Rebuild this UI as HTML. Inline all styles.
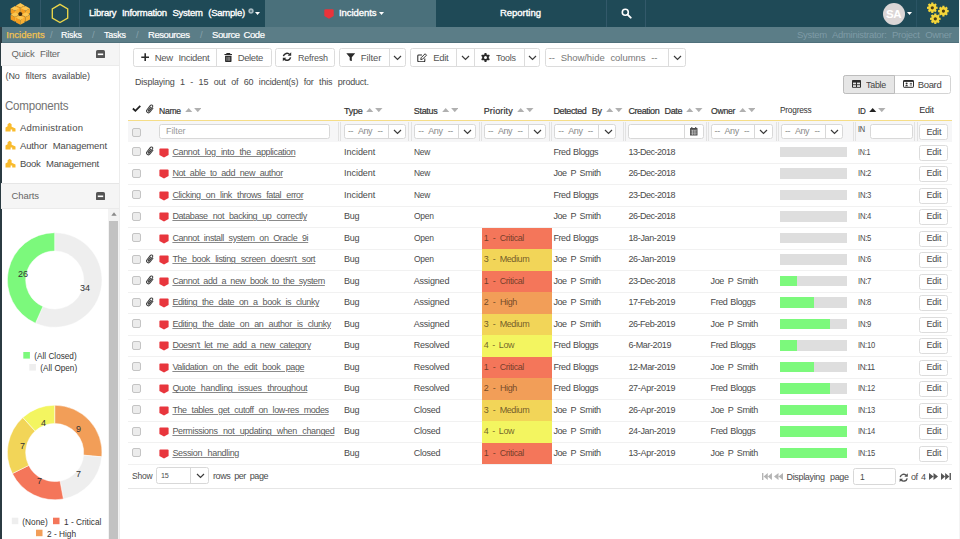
<!DOCTYPE html>
<html lang="en"><head><meta charset="utf-8"><title>Incidents - Library Information System (Sample)</title>
<style>
*{box-sizing:border-box;margin:0;padding:0}
html,body{width:960px;height:539px;overflow:hidden;background:#fff}
body{font-family:"Liberation Sans",sans-serif;font-size:9px;color:#4a4a4a;position:relative}
.abs{position:absolute}
.t{position:absolute;white-space:nowrap;line-height:12px;font-size:9px;color:#4a4a4a}
a.t{text-decoration:underline;color:#5a5a5a}
#top{position:absolute;left:0;top:0;width:959px;height:27px;background:#1f4a57}
.dv{position:absolute;top:0;width:1px;height:27px;background:#33596a}
#tab{position:absolute;left:265px;top:0;width:171px;height:27px;background:#4a707b}
#sub{position:absolute;left:0;top:27px;width:959px;height:16px;background:#5b7d87;border-bottom:1px solid #4f707b}
.ph{position:absolute;left:1px;width:119px;background:#f5f5f5}
.btn{position:absolute;top:48px;height:19px;border:1px solid #dcdcdc;border-radius:2.5px;background:#fff}
.btn i{position:absolute;top:0;width:1px;height:17px;background:#dcdcdc}
.hr{position:absolute;left:128px;width:824px;height:1px;background:#f1f1f1}
.cb{position:absolute;width:9px;height:9px;border:1px solid #c4c4c4;border-radius:2px;background:#ececec}
.pg{position:absolute;left:780px;width:67px;height:10.5px;background:#dedede}
.pg b{display:block;height:10.5px;background:#7cf97c}
.eb{position:absolute;left:919.2px;width:29.2px;height:16px;border:1px solid #dcdcdc;border-radius:2.5px;background:#fff}
.sel{position:absolute;top:123.5px;height:15.5px;border:1px solid #d8d8d8;border-radius:2.5px;background:#fff}
.sel i{position:absolute;top:0;width:1px;height:13.5px;background:#d8d8d8}
.vl{position:absolute;top:122px;width:1px;height:19px;background:#e2e2e2}
</style></head><body>

<div id="top"></div><div id="tab"></div>
<div class="dv" style="left:40px"></div>
<div class="dv" style="left:79px"></div>
<div class="dv" style="left:606px"></div>
<div class="dv" style="left:645px"></div>
<div class="dv" style="left:916px;background:#2a5464"></div>
<svg class="abs" style="left:8.9px;top:1.6px" width="22.6" height="24.6" viewBox="0 0 22 24"><path d="M11 1.0 L15.232 3.3 L11 5.6 L6.768 3.3Z" fill="#fcc650"/><path d="M6.768 3.3 L11 5.6 V10.2 L6.768 7.8999999999999995Z" fill="#f39c1f"/><path d="M15.232 3.3 L11 5.6 V10.2 L15.232 7.8999999999999995Z" fill="#f7b033"/><path d="M5.8 4.0 L10.032 6.3 L5.8 8.6 L1.5679999999999996 6.3Z" fill="#fcc650"/><path d="M1.5679999999999996 6.3 L5.8 8.6 V13.2 L1.5679999999999996 10.899999999999999Z" fill="#f39c1f"/><path d="M10.032 6.3 L5.8 8.6 V13.2 L10.032 10.899999999999999Z" fill="#f7b033"/><path d="M16.2 4.0 L20.432 6.3 L16.2 8.6 L11.968 6.3Z" fill="#fcc650"/><path d="M11.968 6.3 L16.2 8.6 V13.2 L11.968 10.899999999999999Z" fill="#f39c1f"/><path d="M20.432 6.3 L16.2 8.6 V13.2 L20.432 10.899999999999999Z" fill="#f7b033"/><path d="M5.8 10.100000000000001 L10.032 12.4 L5.8 14.7 L1.5679999999999996 12.4Z" fill="#fcc650"/><path d="M1.5679999999999996 12.4 L5.8 14.7 V19.299999999999997 L1.5679999999999996 17.0Z" fill="#f39c1f"/><path d="M10.032 12.4 L5.8 14.7 V19.299999999999997 L10.032 17.0Z" fill="#f7b033"/><path d="M16.2 10.100000000000001 L20.432 12.4 L16.2 14.7 L11.968 12.4Z" fill="#fcc650"/><path d="M11.968 12.4 L16.2 14.7 V19.299999999999997 L11.968 17.0Z" fill="#f39c1f"/><path d="M20.432 12.4 L16.2 14.7 V19.299999999999997 L20.432 17.0Z" fill="#f7b033"/><path d="M11 13.100000000000001 L15.232 15.4 L11 17.7 L6.768 15.4Z" fill="#fcc650"/><path d="M6.768 15.4 L11 17.7 V22.299999999999997 L6.768 20.0Z" fill="#f39c1f"/><path d="M15.232 15.4 L11 17.7 V22.299999999999997 L15.232 20.0Z" fill="#f7b033"/><circle cx="11" cy="11.8" r="1.9" fill="#3b2a12"/></svg>
<svg class="abs" style="left:50px;top:3px" width="20" height="21" viewBox="0 0 20 21"><path d="M10 1.4 L17.7 5.9 V15 L10 19.5 L2.3 15 V5.9 Z" fill="none" stroke="#ead54a" stroke-width="1.35"/></svg>
<span class="t" id="t1" style="left:89px;top:7.20px;font-size:9.5px;color:#fff;word-spacing:3.20px;letter-spacing:-0.24px;-webkit-text-stroke:0.35px #fff;">Library Information System (Sample)</span>
<svg class="abs" style="left:248px;top:8px" width="6" height="6" viewBox="0 0 9 9"><g fill="#a9bcc4"><circle cx="4.5" cy="4.5" r="3.1"/><rect x="3.6" y="0" width="1.8" height="9"/><rect x="0" y="3.6" width="9" height="1.8"/><rect x="3.6" y="0" width="1.8" height="9" transform="rotate(45 4.5 4.5)"/><rect x="3.6" y="0" width="1.8" height="9" transform="rotate(-45 4.5 4.5)"/></g><circle cx="4.5" cy="4.5" r="1.3" fill="#1f4a57"/></svg>
<svg class="abs" style="left:255px;top:12px" width="5" height="3" viewBox="0 0 5 3"><path d="M0 0 H5 L2.5 3Z" fill="#fff"/></svg>
<svg class="abs" style="left:324px;top:8.5px" width="10" height="10" viewBox="0 0 10 10"><path d="M1.5 0.3 H8.5 Q9.7 0.3 9.7 1.5 V7 L5 9.8 L0.3 7 V1.5 Q0.3 0.3 1.5 0.3 Z" fill="#ea333b"/></svg>
<span class="t" id="t2" style="left:339px;top:7.20px;font-size:9.5px;color:#fff;letter-spacing:-0.07px;-webkit-text-stroke:0.35px #fff;">Incidents</span>
<svg class="abs" style="left:379px;top:12px" width="5" height="3" viewBox="0 0 5 3"><path d="M0 0 H5 L2.5 3Z" fill="#fff"/></svg>
<span class="t" id="t3" style="left:500px;top:7.20px;font-size:9.5px;color:#fff;letter-spacing:-0.03px;-webkit-text-stroke:0.35px #fff;">Reporting</span>
<svg class="abs" style="left:621px;top:8px" width="11" height="11" viewBox="0 0 11 11"><circle cx="4.3" cy="4.3" r="3" fill="none" stroke="#fff" stroke-width="1.6"/><path d="M6.6 6.6 L9.7 9.7" stroke="#fff" stroke-width="1.9" stroke-linecap="round"/></svg>
<div class="abs" style="left:882.5px;top:2.5px;width:22px;height:22px;border-radius:11px;background:#dbd6d6"></div>
<span class="t" id="t4" style="left:886px;top:6.60px;font-size:11.5px;color:#fff;font-weight:bold;line-height:14px;letter-spacing:-0.48px;">SA</span>
<svg class="abs" style="left:906.5px;top:12px" width="5" height="3" viewBox="0 0 5 3"><path d="M0 0 H5 L2.5 3Z" fill="#fff"/></svg>
<svg class="abs" style="left:924px;top:0" width="30" height="27" viewBox="0 0 30 27"><path d="M13.59 6.70 L13.59 8.90 L12.37 8.84 L11.92 9.94 L12.81 10.76 L11.26 12.31 L10.44 11.42 L9.34 11.87 L9.40 13.09 L7.20 13.09 L7.26 11.87 L6.16 11.42 L5.34 12.31 L3.79 10.76 L4.68 9.94 L4.23 8.84 L3.01 8.90 L3.01 6.70 L4.23 6.76 L4.68 5.66 L3.79 4.84 L5.34 3.29 L6.16 4.18 L7.26 3.73 L7.20 2.51 L9.40 2.51 L9.34 3.73 L10.44 4.18 L11.26 3.29 L12.81 4.84 L11.92 5.66 L12.37 6.76Z" fill="#f3d53a"/><circle cx="8.3" cy="7.8" r="1.6" fill="#4a3c14"/><path d="M24.69 10.00 L24.69 12.20 L23.47 12.14 L23.02 13.24 L23.91 14.06 L22.36 15.61 L21.54 14.72 L20.44 15.17 L20.50 16.39 L18.30 16.39 L18.36 15.17 L17.26 14.72 L16.44 15.61 L14.89 14.06 L15.78 13.24 L15.33 12.14 L14.11 12.20 L14.11 10.00 L15.33 10.06 L15.78 8.96 L14.89 8.14 L16.44 6.59 L17.26 7.48 L18.36 7.03 L18.30 5.81 L20.50 5.81 L20.44 7.03 L21.54 7.48 L22.36 6.59 L23.91 8.14 L23.02 8.96 L23.47 10.06Z" fill="#f3d53a"/><circle cx="19.4" cy="11.1" r="1.6" fill="#4a3c14"/><path d="M16.59 17.70 L16.59 19.90 L15.37 19.84 L14.92 20.94 L15.81 21.76 L14.26 23.31 L13.44 22.42 L12.34 22.87 L12.40 24.09 L10.20 24.09 L10.26 22.87 L9.16 22.42 L8.34 23.31 L6.79 21.76 L7.68 20.94 L7.23 19.84 L6.01 19.90 L6.01 17.70 L7.23 17.76 L7.68 16.66 L6.79 15.84 L8.34 14.29 L9.16 15.18 L10.26 14.73 L10.20 13.51 L12.40 13.51 L12.34 14.73 L13.44 15.18 L14.26 14.29 L15.81 15.84 L14.92 16.66 L15.37 17.76Z" fill="#f3d53a"/><circle cx="11.3" cy="18.8" r="1.6" fill="#4a3c14"/></svg>
<div class="abs" style="left:959px;top:0;width:1px;height:539px;background:#f4f4f4"></div>
<div id="sub"></div>
<span class="t" id="t5" style="left:6.3px;top:28.70px;font-size:9.5px;color:#f2c250;letter-spacing:0.05px;-webkit-text-stroke:0.25px #f2c250;">Incidents</span>
<span class="t" id="t6" style="left:61px;top:28.70px;font-size:9.5px;color:#fff;letter-spacing:-0.25px;transform:scaleX(0.944);transform-origin:0 50%;-webkit-text-stroke:0.2px #fff;">Risks</span>
<span class="t" id="t7" style="left:104px;top:28.70px;font-size:9.5px;color:#fff;letter-spacing:-0.25px;transform:scaleX(0.944);transform-origin:0 50%;-webkit-text-stroke:0.2px #fff;">Tasks</span>
<span class="t" id="t8" style="left:148px;top:28.70px;font-size:9.5px;color:#fff;letter-spacing:-0.43px;-webkit-text-stroke:0.2px #fff;">Resources</span>
<span class="t" id="t9" style="left:212px;top:28.70px;font-size:9.5px;color:#fff;word-spacing:1.55px;letter-spacing:-0.40px;-webkit-text-stroke:0.2px #fff;">Source Code</span>
<span class="t" id="t10" style="left:50px;top:28.70px;font-size:9.5px;color:#86a1ab;">/</span>
<span class="t" id="t11" style="left:92px;top:28.70px;font-size:9.5px;color:#86a1ab;">/</span>
<span class="t" id="t12" style="left:136px;top:28.70px;font-size:9.5px;color:#86a1ab;">/</span>
<span class="t" id="t13" style="left:200px;top:28.70px;font-size:9.5px;color:#86a1ab;">/</span>
<span class="t" id="t14" style="left:797px;top:28.70px;font-size:9.5px;color:#7e9ba6;word-spacing:3.20px;letter-spacing:-0.29px;">System Administrator: Project Owner</span>
<div class="abs" style="left:0;top:27px;width:1.5px;height:512px;background:#2b3b42"></div>
<div class="ph" style="top:43px;height:23px;border-bottom:1px solid #ebebeb"></div>
<span class="t" id="t15" style="left:11.5px;top:47.80px;font-size:9.5px;color:#666;word-spacing:3.20px;letter-spacing:-0.25px;">Quick Filter</span>
<svg class="abs" style="left:96.3px;top:49.5px" width="9" height="8.5" viewBox="0 0 9 8.5"><rect x="0" y="0" width="9" height="8.5" rx="1.6" fill="#555"/><rect x="1.8" y="3.5" width="5.4" height="1.6" fill="#fff"/></svg>
<span class="t" id="t16" style="left:5.5px;top:69.50px;word-spacing:3.20px;letter-spacing:-0.07px;">(No filters available)</span>
<span class="t" id="t17" style="left:4.5px;top:97.60px;font-size:12.5px;color:#727272;line-height:16px;letter-spacing:-0.25px;transform:scaleX(0.925);transform-origin:0 50%;">Components</span>
<svg class="abs" style="left:5px;top:122.3px" width="11" height="10" viewBox="0 0 11 10"><path d="M0.5 9.6 V5.6 L2.6 4.2 V2.2 L4.6 0.8 L6.6 2.2 V4.8 L10.5 6.6 V9.6 H7.2 V7.6 H5.6 V9.6 Z" fill="#f9bb2d"/></svg>
<span class="t" id="t18" style="left:20px;top:121.80px;font-size:9.5px;letter-spacing:0.21px;">Administration</span>
<svg class="abs" style="left:5px;top:140.3px" width="11" height="10" viewBox="0 0 11 10"><path d="M0.5 9.6 V5.6 L2.6 4.2 V2.2 L4.6 0.8 L6.6 2.2 V4.8 L10.5 6.6 V9.6 H7.2 V7.6 H5.6 V9.6 Z" fill="#f9bb2d"/></svg>
<span class="t" id="t19" style="left:20px;top:139.80px;font-size:9.5px;word-spacing:3.20px;letter-spacing:-0.14px;">Author Management</span>
<svg class="abs" style="left:5px;top:158.0px" width="11" height="10" viewBox="0 0 11 10"><path d="M0.5 9.6 V5.6 L2.6 4.2 V2.2 L4.6 0.8 L6.6 2.2 V4.8 L10.5 6.6 V9.6 H7.2 V7.6 H5.6 V9.6 Z" fill="#f9bb2d"/></svg>
<span class="t" id="t20" style="left:20px;top:157.50px;font-size:9.5px;word-spacing:3.20px;letter-spacing:-0.28px;">Book Management</span>
<div class="abs" style="left:1px;top:182.5px;width:119px;height:1px;background:#e6e6e6"></div>
<div class="ph" style="top:183.5px;height:25px;border-bottom:1px solid #ebebeb"></div>
<span class="t" id="t21" style="left:11.5px;top:189.80px;font-size:9.5px;color:#666;letter-spacing:-0.10px;">Charts</span>
<svg class="abs" style="left:96.3px;top:191.5px" width="9" height="8.5" viewBox="0 0 9 8.5"><rect x="0" y="0" width="9" height="8.5" rx="1.6" fill="#555"/><rect x="1.8" y="3.5" width="5.4" height="1.6" fill="#fff"/></svg>
<div class="abs" style="left:119px;top:43px;width:1px;height:496px;background:#ececec"></div>
<div class="abs" style="left:108px;top:208.5px;width:11px;height:331px;background:#f3f3f3"></div>
<div class="abs" style="left:109px;top:220.5px;width:9px;height:319px;background:#c2c2c2"></div>
<svg class="abs" style="left:110.5px;top:212px" width="6" height="4" viewBox="0 0 6 4"><path d="M3 0.3 L5.7 3.7 H0.3Z" fill="#8a8a8a"/></svg>
<svg class="abs" style="left:0;top:206px" width="108" height="333" viewBox="0 0 108 333" font-family="Liberation Sans,sans-serif" fill="#333"><path d="M54.70 26.70 A47.3 47.3 0 1 1 35.46 117.21 L42.90 100.49 A29 29 0 1 0 54.70 45.00Z" fill="#eeeeee" stroke="#fff" stroke-width="0.5"/><path d="M35.46 117.21 A47.3 47.3 0 0 1 54.70 26.70 L54.70 45.00 A29 29 0 0 0 42.90 100.49Z" fill="#7cf97c" stroke="#fff" stroke-width="0.5"/><text x="18" y="71" font-size="9">26</text><text x="80" y="85" font-size="9">34</text><rect x="23.3" y="146" width="6.6" height="6.6" fill="#7cf97c"/><text x="34.3" y="153" font-size="8.2">(All Closed)</text><rect x="29.3" y="158" width="6.6" height="6.6" fill="#eeeeee"/><text x="40.3" y="165" font-size="8.2">(All Open)</text><path d="M54.70 199.20 A47.3 47.3 0 0 1 101.80 250.86 L83.58 249.18 A29 29 0 0 0 54.70 217.50Z" fill="#f29e58" stroke="#fff" stroke-width="0.5"/><path d="M101.80 250.86 A47.3 47.3 0 0 1 63.39 292.99 L60.03 275.01 A29 29 0 0 0 83.58 249.18Z" fill="#eeeeee" stroke="#fff" stroke-width="0.5"/><path d="M63.39 292.99 A47.3 47.3 0 0 1 12.36 267.58 L28.74 259.43 A29 29 0 0 0 60.03 275.01Z" fill="#f4765a" stroke="#fff" stroke-width="0.5"/><path d="M12.36 267.58 A47.3 47.3 0 0 1 22.83 211.54 L35.16 225.07 A29 29 0 0 0 28.74 259.43Z" fill="#f2d558" stroke="#fff" stroke-width="0.5"/><path d="M22.83 211.54 A47.3 47.3 0 0 1 54.70 199.20 L54.70 217.50 A29 29 0 0 0 35.16 225.07Z" fill="#f3f560" stroke="#fff" stroke-width="0.5"/><text x="41" y="220" font-size="9">4</text><text x="76" y="226" font-size="9">9</text><text x="20" y="243" font-size="9">7</text><text x="76" y="271" font-size="9">7</text><text x="37" y="278" font-size="9">7</text><rect x="11.8" y="311.7" width="6.5" height="6.5" fill="#eeeeee"/><text x="22.3" y="319" font-size="8.3">(None)</text><rect x="53" y="311.7" width="6.5" height="6.5" fill="#f4765a"/><text x="64" y="319" font-size="8.3">1 - Critical</text><rect x="36" y="323.7" width="6.5" height="6.5" fill="#f29e58"/><text x="47" y="331" font-size="8.3">2 - High</text></svg>
<div class="btn" style="left:133px;width:138.5px"></div><div class="abs" style="left:216px;top:49px;width:1px;height:17px;background:#dcdcdc"></div>
<svg class="abs" style="left:140.5px;top:53px" width="8.4" height="8.4" viewBox="0 0 9 9"><path d="M4.5 0.3 V8.7 M0.3 4.5 H8.7" stroke="#2a2a2a" stroke-width="1.7"/></svg>
<span class="t" id="t22" style="left:154.7px;top:51.50px;font-size:9.5px;color:#555;word-spacing:3.20px;letter-spacing:-0.28px;">New Incident</span>
<svg class="abs" style="left:223.6px;top:52.5px" width="8.6" height="9.2" viewBox="0 0 9 10"><path d="M0.3 1.6 H8.7 M3 1.3 V0.5 H6 V1.3" stroke="#2a2a2a" stroke-width="1.2" fill="none"/><path d="M1 3 H8 V9 Q8 9.8 7.2 9.8 H1.8 Q1 9.8 1 9Z" fill="#2a2a2a"/><path d="M3 4.2 V8.5 M4.5 4.2 V8.5 M6 4.2 V8.5" stroke="#fff" stroke-width="0.5"/></svg>
<span class="t" id="t23" style="left:237.7px;top:51.50px;font-size:9.5px;color:#555;letter-spacing:-0.37px;">Delete</span>
<div class="btn" style="left:275px;width:60px"></div>
<svg class="abs" style="left:281.5px;top:52.3px" width="10" height="9.6" viewBox="0 0 11 11"><path d="M1.4 4.8 A4.2 4.2 0 0 1 8.7 3" fill="none" stroke="#2a2a2a" stroke-width="1.7"/><path d="M10.3 0.4 V4.4 H6.3Z" fill="#2a2a2a"/><path d="M9.6 6.2 A4.2 4.2 0 0 1 2.3 8" fill="none" stroke="#2a2a2a" stroke-width="1.7"/><path d="M0.7 10.6 V6.6 H4.7Z" fill="#2a2a2a"/></svg>
<span class="t" id="t24" style="left:297.5px;top:51.50px;font-size:9.5px;color:#555;letter-spacing:-0.25px;transform:scaleX(0.944);transform-origin:0 50%;">Refresh</span>
<div class="btn" style="left:338.7px;width:67.60000000000002px"></div><div class="abs" style="left:388.5px;top:49px;width:1px;height:17px;background:#dcdcdc"></div>
<svg class="abs" style="left:345.8px;top:52.7px" width="9.5" height="8.7" viewBox="0 0 9.5 8.7"><path d="M0.3 0.2 H9.2 L5.8 4.2 V8.5 L3.7 7.3 V4.2Z" fill="#2a2a2a"/></svg>
<span class="t" id="t25" style="left:360.8px;top:51.50px;font-size:9.5px;color:#555;letter-spacing:-0.12px;">Filter</span>
<svg class="abs" style="left:393px;top:54.8px" width="9" height="6" viewBox="0 0 9 6"><path d="M1 1 L4.5 4.5 L8 1" fill="none" stroke="#3a3a3a" stroke-width="1.2"/></svg>
<div class="btn" style="left:410.3px;width:129.7px"></div><div class="abs" style="left:456px;top:49px;width:1px;height:17px;background:#dcdcdc"></div><div class="abs" style="left:473.5px;top:49px;width:1px;height:17px;background:#dcdcdc"></div><div class="abs" style="left:523.5px;top:49px;width:1px;height:17px;background:#dcdcdc"></div>
<svg class="abs" style="left:417px;top:52.5px" width="10.5" height="9.5" viewBox="0 0 11 10"><path d="M8.2 5.8 V8.2 Q8.2 9.2 7.2 9.2 H1.8 Q0.8 9.2 0.8 8.2 V3 Q0.8 2 1.8 2 H5.2" fill="none" stroke="#2a2a2a" stroke-width="1.1"/><path d="M3.9 6.9 L4.3 5 L8.5 0.8 L10 2.3 L5.8 6.5Z" fill="none" stroke="#2a2a2a" stroke-width="1"/></svg>
<span class="t" id="t26" style="left:433.3px;top:51.50px;font-size:9.5px;color:#555;letter-spacing:-0.33px;">Edit</span>
<svg class="abs" style="left:460.5px;top:54.8px" width="9" height="6" viewBox="0 0 9 6"><path d="M1 1 L4.5 4.5 L8 1" fill="none" stroke="#3a3a3a" stroke-width="1.2"/></svg>
<svg class="abs" style="left:480.6px;top:52.8px" width="9" height="9" viewBox="0 0 9 9"><g fill="#2a2a2a"><circle cx="4.5" cy="4.5" r="3.3"/><rect x="3.5" y="0" width="2" height="9"/><rect x="3.5" y="0" width="2" height="9" transform="rotate(60 4.5 4.5)"/><rect x="3.5" y="0" width="2" height="9" transform="rotate(-60 4.5 4.5)"/></g><circle cx="4.5" cy="4.5" r="1.5" fill="#fff"/></svg>
<span class="t" id="t27" style="left:495.8px;top:51.50px;font-size:9.5px;color:#555;letter-spacing:-0.25px;transform:scaleX(0.944);transform-origin:0 50%;">Tools</span>
<svg class="abs" style="left:528px;top:54.8px" width="9" height="6" viewBox="0 0 9 6"><path d="M1 1 L4.5 4.5 L8 1" fill="none" stroke="#3a3a3a" stroke-width="1.2"/></svg>
<div class="btn" style="left:544.5px;width:141.79999999999995px"></div><div class="abs" style="left:667.5px;top:49px;width:1px;height:17px;background:#dcdcdc"></div>
<span class="t" id="t28" style="left:548.7px;top:51.50px;font-size:9.5px;color:#777;word-spacing:3.20px;letter-spacing:-0.05px;">-- Show/hide columns --</span>
<svg class="abs" style="left:672.5px;top:54.8px" width="9" height="6" viewBox="0 0 9 6"><path d="M1 1 L4.5 4.5 L8 1" fill="none" stroke="#3a3a3a" stroke-width="1.2"/></svg>
<span class="t" id="t29" style="left:135px;top:76.30px;word-spacing:3.20px;letter-spacing:-0.20px;">Displaying 1 - 15 out of 60 incident(s) for this product.</span>
<div class="abs" style="left:843px;top:75px;width:107.5px;height:18.7px;border:1px solid #d4d4d4;border-radius:2.5px;background:#fff"></div>
<div class="abs" style="left:843px;top:75px;width:52px;height:18.7px;border:1px solid #bdbdbd;border-radius:2.5px 0 0 2.5px;background:#e6e6e6"></div>
<svg class="abs" style="left:852px;top:80px" width="9" height="7.8" viewBox="0 0 9 7.8"><rect x="0" y="0" width="9" height="7.8" rx="0.8" fill="#2a2a2a"/><rect x="1" y="2.6" width="3" height="1.7" fill="#e6e6e6"/><rect x="5" y="2.6" width="3" height="1.7" fill="#e6e6e6"/><rect x="1" y="5.2" width="3" height="1.7" fill="#e6e6e6"/><rect x="5" y="5.2" width="3" height="1.7" fill="#e6e6e6"/></svg>
<span class="t" id="t30" style="left:865.5px;top:78.80px;font-size:9.5px;color:#444;letter-spacing:-0.25px;transform:scaleX(0.935);transform-origin:0 50%;">Table</span>
<svg class="abs" style="left:903px;top:80px" width="11" height="7.8" viewBox="0 0 11 7.8"><rect x="0.5" y="0.5" width="10" height="6.8" rx="0.6" fill="none" stroke="#2a2a2a" stroke-width="1"/><rect x="0.5" y="0.5" width="10" height="1.4" fill="#2a2a2a"/><circle cx="3.6" cy="3.6" r="1" fill="#2a2a2a"/><path d="M1.9 6.3 Q3.6 3.8 5.3 6.3Z" fill="#2a2a2a"/><path d="M6.8 3.4 H9 M6.8 5 H9" stroke="#2a2a2a" stroke-width="0.8"/></svg>
<span class="t" id="t31" style="left:917.7px;top:78.80px;font-size:9.5px;color:#444;letter-spacing:-0.34px;">Board</span>
<svg class="abs" style="left:131.8px;top:105.3px" width="9.2" height="7" viewBox="0 0 9.2 7"><path d="M0.9 3.5 L3.4 5.8 L8.3 0.9" fill="none" stroke="#222" stroke-width="1.8"/></svg>
<svg class="abs" style="left:145px;top:104.3px" width="10" height="10" viewBox="0 0 10 10"><g transform="rotate(38 5 5)"><path d="M6.9 2.6 V7.4 a1.9 1.9 0 0 1 -3.8 0 V1.9 a1.3 1.3 0 0 1 2.6 0 V6.9 a0.65 0.65 0 0 1 -1.3 0 V3.2" fill="none" stroke="#3a3a3a" stroke-width="1" stroke-linecap="round"/></g></svg>
<span class="t" id="t32" style="left:158.9px;top:105.30px;color:#333;letter-spacing:-0.25px;transform:scaleX(0.950);transform-origin:0 50%;-webkit-text-stroke:0.2px #333;">Name</span>
<svg class="abs" style="left:184.7px;top:108.1px" width="16.5" height="4.2" viewBox="0 0 16.5 4.2"><path d="M0 4.2 L3.7 0 L7.4 4.2Z" fill="#b0b0b0"/><path d="M9.1 0 H16.5 L12.8 4.2Z" fill="#b0b0b0"/></svg>
<span class="t" id="t33" style="left:344px;top:105.30px;color:#333;letter-spacing:-0.24px;-webkit-text-stroke:0.2px #333;">Type</span>
<svg class="abs" style="left:366px;top:108.1px" width="16.5" height="4.2" viewBox="0 0 16.5 4.2"><path d="M0 4.2 L3.7 0 L7.4 4.2Z" fill="#b0b0b0"/><path d="M9.1 0 H16.5 L12.8 4.2Z" fill="#b0b0b0"/></svg>
<span class="t" id="t34" style="left:413.7px;top:105.30px;color:#333;letter-spacing:-0.28px;-webkit-text-stroke:0.2px #333;">Status</span>
<svg class="abs" style="left:441.5px;top:108.1px" width="16.5" height="4.2" viewBox="0 0 16.5 4.2"><path d="M0 4.2 L3.7 0 L7.4 4.2Z" fill="#b0b0b0"/><path d="M9.1 0 H16.5 L12.8 4.2Z" fill="#b0b0b0"/></svg>
<span class="t" id="t35" style="left:483.7px;top:105.30px;color:#333;letter-spacing:0.15px;-webkit-text-stroke:0.2px #333;">Priority</span>
<svg class="abs" style="left:517px;top:108.1px" width="16.5" height="4.2" viewBox="0 0 16.5 4.2"><path d="M0 4.2 L3.7 0 L7.4 4.2Z" fill="#b0b0b0"/><path d="M9.1 0 H16.5 L12.8 4.2Z" fill="#b0b0b0"/></svg>
<span class="t" id="t36" style="left:553.4px;top:105.30px;color:#333;word-spacing:3.20px;letter-spacing:-0.37px;-webkit-text-stroke:0.2px #333;">Detected By</span>
<svg class="abs" style="left:606px;top:108.1px" width="16.5" height="4.2" viewBox="0 0 16.5 4.2"><path d="M0 4.2 L3.7 0 L7.4 4.2Z" fill="#b0b0b0"/><path d="M9.1 0 H16.5 L12.8 4.2Z" fill="#b0b0b0"/></svg>
<span class="t" id="t37" style="left:628.4px;top:105.30px;color:#333;word-spacing:3.20px;letter-spacing:-0.39px;-webkit-text-stroke:0.2px #333;">Creation Date</span>
<svg class="abs" style="left:686px;top:108.1px" width="16.5" height="4.2" viewBox="0 0 16.5 4.2"><path d="M0 4.2 L3.7 0 L7.4 4.2Z" fill="#b0b0b0"/><path d="M9.1 0 H16.5 L12.8 4.2Z" fill="#b0b0b0"/></svg>
<span class="t" id="t38" style="left:710.6px;top:105.30px;color:#333;letter-spacing:-0.25px;transform:scaleX(0.956);transform-origin:0 50%;-webkit-text-stroke:0.2px #333;">Owner</span>
<svg class="abs" style="left:738.7px;top:108.1px" width="16.5" height="4.2" viewBox="0 0 16.5 4.2"><path d="M0 4.2 L3.7 0 L7.4 4.2Z" fill="#b0b0b0"/><path d="M9.1 0 H16.5 L12.8 4.2Z" fill="#b0b0b0"/></svg>
<span class="t" id="t39" style="left:780.3px;top:103.50px;color:#333;letter-spacing:-0.25px;transform:scaleX(0.925);transform-origin:0 50%;">Progress</span>
<span class="t" id="t40" style="left:857.5px;top:105.30px;color:#333;letter-spacing:-0.25px;transform:scaleX(0.891);transform-origin:0 50%;-webkit-text-stroke:0.2px #333;">ID</span>
<svg class="abs" style="left:869.4px;top:108.1px" width="16.5" height="4.2" viewBox="0 0 16.5 4.2"><path d="M0 4.2 L3.7 0 L7.4 4.2Z" fill="#222"/><path d="M9.1 0 H16.5 L12.8 4.2Z" fill="#b0b0b0"/></svg>
<span class="t" id="t41" style="left:919.2px;top:103.70px;color:#333;letter-spacing:-0.24px;">Edit</span>
<div class="abs" style="left:128px;top:120px;width:824px;height:1.2px;background:#f5dd88"></div>
<div class="abs" style="left:128px;top:121.2px;width:824px;height:20.6px;background:#f6f6f7"></div>
<div class="cb" style="left:132px;top:128px"></div>
<div class="sel" style="left:159.4px;width:171px"></div>
<span class="t" id="t42" style="left:166px;top:125.30px;color:#9a9a9a;letter-spacing:-0.08px;">Filter</span>
<div class="sel" style="left:344px;width:62px"><i style="left:42.80000000000001px"></i></div><span class="t" id="t43" style="left:348px;top:125.30px;color:#8a8a8a;word-spacing:3.09px;letter-spacing:-0.40px;">-- Any --</span><svg class="abs" style="left:392.8px;top:128.8px" width="9" height="6" viewBox="0 0 9 6"><path d="M1 1 L4.5 4.5 L8 1" fill="none" stroke="#3a3a3a" stroke-width="1.2"/></svg>
<div class="sel" style="left:414.3px;width:61.69999999999999px"><i style="left:42.69999999999999px"></i></div><span class="t" id="t44" style="left:418.3px;top:125.30px;color:#8a8a8a;word-spacing:3.09px;letter-spacing:-0.40px;">-- Any --</span><svg class="abs" style="left:463px;top:128.8px" width="9" height="6" viewBox="0 0 9 6"><path d="M1 1 L4.5 4.5 L8 1" fill="none" stroke="#3a3a3a" stroke-width="1.2"/></svg>
<div class="sel" style="left:484px;width:62px"><i style="left:43px"></i></div><span class="t" id="t45" style="left:488px;top:125.30px;color:#8a8a8a;word-spacing:3.09px;letter-spacing:-0.40px;">-- Any --</span><svg class="abs" style="left:533px;top:128.8px" width="9" height="6" viewBox="0 0 9 6"><path d="M1 1 L4.5 4.5 L8 1" fill="none" stroke="#3a3a3a" stroke-width="1.2"/></svg>
<div class="sel" style="left:554.3px;width:62.200000000000045px"><i style="left:43.200000000000045px"></i></div><span class="t" id="t46" style="left:558.3px;top:125.30px;color:#8a8a8a;word-spacing:3.09px;letter-spacing:-0.40px;">-- Any --</span><svg class="abs" style="left:603.5px;top:128.8px" width="9" height="6" viewBox="0 0 9 6"><path d="M1 1 L4.5 4.5 L8 1" fill="none" stroke="#3a3a3a" stroke-width="1.2"/></svg>
<div class="sel" style="left:710.6px;width:62.39999999999998px"><i style="left:42.799999999999955px"></i></div><span class="t" id="t47" style="left:714.6px;top:125.30px;color:#8a8a8a;word-spacing:3.09px;letter-spacing:-0.40px;">-- Any --</span><svg class="abs" style="left:759.4px;top:128.8px" width="9" height="6" viewBox="0 0 9 6"><path d="M1 1 L4.5 4.5 L8 1" fill="none" stroke="#3a3a3a" stroke-width="1.2"/></svg>
<div class="sel" style="left:781px;width:61.5px"><i style="left:42.700000000000045px"></i></div><span class="t" id="t48" style="left:785px;top:125.30px;color:#8a8a8a;word-spacing:3.09px;letter-spacing:-0.40px;">-- Any --</span><svg class="abs" style="left:829.7px;top:128.8px" width="9" height="6" viewBox="0 0 9 6"><path d="M1 1 L4.5 4.5 L8 1" fill="none" stroke="#3a3a3a" stroke-width="1.2"/></svg>
<div class="sel" style="left:628.4px;width:75.4px"><i style="left:55px"></i></div>
<svg class="abs" style="left:690px;top:127px" width="7.5" height="8.5" viewBox="0 0 7.5 8.5"><rect x="0" y="1" width="7.5" height="7.5" rx="0.6" fill="#4a4a4a"/><path d="M1.8 0 V2 M5.7 0 V2" stroke="#4a4a4a" stroke-width="1.1"/><path d="M0.6 3.2 H6.9 M0.6 5 H6.9 M0.6 6.8 H6.9 M2.6 3 V8 M4.9 3 V8" stroke="#fff" stroke-width="0.45"/></svg>
<span class="t" id="t49" style="left:857.8px;top:124.20px;font-size:8.2px;letter-spacing:-0.25px;transform:scaleX(0.907);transform-origin:0 50%;">IN</span>
<div class="sel" style="left:870px;width:42.5px"></div>
<div class="eb" style="top:123.7px"></div><span class="t" id="t50" style="left:926.6px;top:125.50px;letter-spacing:-0.24px;">Edit</span>
<div class="vl" style="left:337.5px"></div>
<div class="vl" style="left:340px"></div>
<div class="vl" style="left:408px"></div>
<div class="vl" style="left:410.5px"></div>
<div class="vl" style="left:478.5px"></div>
<div class="vl" style="left:481px"></div>
<div class="vl" style="left:548.7px"></div>
<div class="vl" style="left:551.2px"></div>
<div class="vl" style="left:622.5px"></div>
<div class="vl" style="left:625px"></div>
<div class="vl" style="left:705.5px"></div>
<div class="vl" style="left:708px"></div>
<div class="vl" style="left:775.5px"></div>
<div class="vl" style="left:778px"></div>
<div class="vl" style="left:852.5px"></div>
<div class="vl" style="left:855px"></div>
<div class="vl" style="left:914px"></div>
<div class="vl" style="left:916.5px"></div>
<div class="hr" style="top:162.8px"></div>
<div class="cb" style="left:132px;top:147.2px"></div>
<svg class="abs" style="left:145px;top:146.4px" width="10" height="10" viewBox="0 0 10 10"><g transform="rotate(38 5 5)"><path d="M6.9 2.6 V7.4 a1.9 1.9 0 0 1 -3.8 0 V1.9 a1.3 1.3 0 0 1 2.6 0 V6.9 a0.65 0.65 0 0 1 -1.3 0 V3.2" fill="none" stroke="#3a3a3a" stroke-width="1" stroke-linecap="round"/></g></svg>
<svg class="abs" style="left:159px;top:147.6px" width="10" height="10" viewBox="0 0 10 10"><path d="M1.3 0.5 H8.7 Q9.6 0.5 9.6 1.4 V7 L5 9.6 L0.4 7 V1.4 Q0.4 0.5 1.3 0.5 Z" fill="#e8363d"/></svg>
<span class="t" id="t51" style="left:172.4px;top:145.80px;word-spacing:3.20px;letter-spacing:-0.35px;text-decoration:underline;text-decoration-color:#8a8a8a;color:#5a5a5a;">Cannot log into the application</span>
<span class="t" id="t52" style="left:344px;top:145.80px;letter-spacing:-0.03px;">Incident</span>
<span class="t" id="t53" style="left:413.7px;top:145.80px;letter-spacing:-0.25px;transform:scaleX(0.931);transform-origin:0 50%;">New</span>
<span class="t" id="t54" style="left:553.4px;top:145.80px;word-spacing:0.80px;letter-spacing:-0.42px;">Fred Bloggs</span>
<span class="t" id="t55" style="left:628.4px;top:145.80px;letter-spacing:-0.49px;">13-Dec-2018</span>
<div class="pg" style="top:146.5px"><b style="width:0%"></b></div>
<span class="t" id="t56" style="left:857.8px;top:146.60px;font-size:8.2px;letter-spacing:-0.25px;transform:scaleX(0.868);transform-origin:0 50%;">IN:1</span>
<div class="eb" style="top:144.6px"></div><span class="t" id="t57" style="left:926.6px;top:145.80px;letter-spacing:-0.24px;">Edit</span>
<div class="hr" style="top:184.3px"></div>
<div class="cb" style="left:132px;top:168.7px"></div>
<svg class="abs" style="left:159px;top:169.1px" width="10" height="10" viewBox="0 0 10 10"><path d="M1.3 0.5 H8.7 Q9.6 0.5 9.6 1.4 V7 L5 9.6 L0.4 7 V1.4 Q0.4 0.5 1.3 0.5 Z" fill="#e8363d"/></svg>
<span class="t" id="t58" style="left:172.4px;top:167.30px;word-spacing:2.54px;letter-spacing:-0.40px;text-decoration:underline;text-decoration-color:#8a8a8a;color:#5a5a5a;">Not able to add new author</span>
<span class="t" id="t59" style="left:344px;top:167.30px;letter-spacing:-0.03px;">Incident</span>
<span class="t" id="t60" style="left:413.7px;top:167.30px;letter-spacing:-0.25px;transform:scaleX(0.931);transform-origin:0 50%;">New</span>
<span class="t" id="t61" style="left:553.4px;top:167.30px;word-spacing:1.62px;letter-spacing:-0.40px;">Joe P Smith</span>
<span class="t" id="t62" style="left:628.4px;top:167.30px;letter-spacing:-0.49px;">26-Dec-2018</span>
<div class="pg" style="top:168.0px"><b style="width:0%"></b></div>
<span class="t" id="t63" style="left:857.8px;top:168.10px;font-size:8.2px;letter-spacing:-0.25px;transform:scaleX(0.938);transform-origin:0 50%;">IN:2</span>
<div class="eb" style="top:166.1px"></div><span class="t" id="t64" style="left:926.6px;top:167.30px;letter-spacing:-0.24px;">Edit</span>
<div class="hr" style="top:205.8px"></div>
<div class="cb" style="left:132px;top:190.2px"></div>
<svg class="abs" style="left:159px;top:190.6px" width="10" height="10" viewBox="0 0 10 10"><path d="M1.3 0.5 H8.7 Q9.6 0.5 9.6 1.4 V7 L5 9.6 L0.4 7 V1.4 Q0.4 0.5 1.3 0.5 Z" fill="#e8363d"/></svg>
<span class="t" id="t65" style="left:172.4px;top:188.80px;word-spacing:2.97px;letter-spacing:-0.40px;text-decoration:underline;text-decoration-color:#8a8a8a;color:#5a5a5a;">Clicking on link throws fatal error</span>
<span class="t" id="t66" style="left:344px;top:188.80px;letter-spacing:-0.03px;">Incident</span>
<span class="t" id="t67" style="left:413.7px;top:188.80px;letter-spacing:-0.25px;transform:scaleX(0.931);transform-origin:0 50%;">New</span>
<span class="t" id="t68" style="left:553.4px;top:188.80px;word-spacing:0.80px;letter-spacing:-0.42px;">Fred Bloggs</span>
<span class="t" id="t69" style="left:628.4px;top:188.80px;letter-spacing:-0.49px;">23-Dec-2018</span>
<div class="pg" style="top:189.5px"><b style="width:0%"></b></div>
<span class="t" id="t70" style="left:857.8px;top:189.60px;font-size:8.2px;letter-spacing:-0.25px;transform:scaleX(0.938);transform-origin:0 50%;">IN:3</span>
<div class="eb" style="top:187.6px"></div><span class="t" id="t71" style="left:926.6px;top:188.80px;letter-spacing:-0.24px;">Edit</span>
<div class="hr" style="top:227.3px"></div>
<div class="cb" style="left:132px;top:211.7px"></div>
<svg class="abs" style="left:159px;top:212.1px" width="10" height="10" viewBox="0 0 10 10"><path d="M1.3 0.5 H8.7 Q9.6 0.5 9.6 1.4 V7 L5 9.6 L0.4 7 V1.4 Q0.4 0.5 1.3 0.5 Z" fill="#e8363d"/></svg>
<span class="t" id="t72" style="left:172.4px;top:210.30px;word-spacing:2.88px;letter-spacing:-0.40px;text-decoration:underline;text-decoration-color:#8a8a8a;color:#5a5a5a;">Database not backing up correctly</span>
<span class="t" id="t73" style="left:344px;top:210.30px;letter-spacing:-0.26px;">Bug</span>
<span class="t" id="t74" style="left:413.7px;top:210.30px;letter-spacing:-0.25px;transform:scaleX(0.940);transform-origin:0 50%;">Open</span>
<span class="t" id="t75" style="left:553.4px;top:210.30px;word-spacing:1.62px;letter-spacing:-0.40px;">Joe P Smith</span>
<span class="t" id="t76" style="left:628.4px;top:210.30px;letter-spacing:-0.49px;">26-Dec-2018</span>
<div class="pg" style="top:211.0px"><b style="width:0%"></b></div>
<span class="t" id="t77" style="left:857.8px;top:211.10px;font-size:8.2px;letter-spacing:-0.25px;transform:scaleX(0.938);transform-origin:0 50%;">IN:4</span>
<div class="eb" style="top:209.1px"></div><span class="t" id="t78" style="left:926.6px;top:210.30px;letter-spacing:-0.24px;">Edit</span>
<div class="hr" style="top:248.8px"></div>
<div class="cb" style="left:132px;top:233.2px"></div>
<svg class="abs" style="left:159px;top:233.6px" width="10" height="10" viewBox="0 0 10 10"><path d="M1.3 0.5 H8.7 Q9.6 0.5 9.6 1.4 V7 L5 9.6 L0.4 7 V1.4 Q0.4 0.5 1.3 0.5 Z" fill="#e8363d"/></svg>
<span class="t" id="t79" style="left:172.4px;top:231.80px;word-spacing:2.57px;letter-spacing:-0.40px;text-decoration:underline;text-decoration-color:#8a8a8a;color:#5a5a5a;">Cannot install system on Oracle 9i</span>
<span class="t" id="t80" style="left:344px;top:231.80px;letter-spacing:-0.26px;">Bug</span>
<span class="t" id="t81" style="left:413.7px;top:231.80px;letter-spacing:-0.25px;transform:scaleX(0.940);transform-origin:0 50%;">Open</span>
<div class="abs" style="left:482px;top:227.8px;width:69.6px;height:21.5px;background:#f4765a"></div>
<span class="t" id="t82" style="left:483.7px;top:231.80px;color:rgba(60,40,20,0.72);word-spacing:2.29px;letter-spacing:-0.40px;">1 - Critical</span>
<span class="t" id="t83" style="left:553.4px;top:231.80px;word-spacing:0.80px;letter-spacing:-0.42px;">Fred Bloggs</span>
<span class="t" id="t84" style="left:628.4px;top:231.80px;letter-spacing:-0.34px;">18-Jan-2019</span>
<div class="pg" style="top:232.5px"><b style="width:0%"></b></div>
<span class="t" id="t85" style="left:857.8px;top:232.60px;font-size:8.2px;letter-spacing:-0.25px;transform:scaleX(0.938);transform-origin:0 50%;">IN:5</span>
<div class="eb" style="top:230.6px"></div><span class="t" id="t86" style="left:926.6px;top:231.80px;letter-spacing:-0.24px;">Edit</span>
<div class="hr" style="top:270.3px"></div>
<div class="cb" style="left:132px;top:254.7px"></div>
<svg class="abs" style="left:145px;top:253.9px" width="10" height="10" viewBox="0 0 10 10"><g transform="rotate(38 5 5)"><path d="M6.9 2.6 V7.4 a1.9 1.9 0 0 1 -3.8 0 V1.9 a1.3 1.3 0 0 1 2.6 0 V6.9 a0.65 0.65 0 0 1 -1.3 0 V3.2" fill="none" stroke="#3a3a3a" stroke-width="1" stroke-linecap="round"/></g></svg>
<svg class="abs" style="left:159px;top:255.1px" width="10" height="10" viewBox="0 0 10 10"><path d="M1.3 0.5 H8.7 Q9.6 0.5 9.6 1.4 V7 L5 9.6 L0.4 7 V1.4 Q0.4 0.5 1.3 0.5 Z" fill="#e8363d"/></svg>
<span class="t" id="t87" style="left:172.4px;top:253.30px;word-spacing:3.18px;letter-spacing:-0.40px;text-decoration:underline;text-decoration-color:#8a8a8a;color:#5a5a5a;">The book listing screen doesn't sort</span>
<span class="t" id="t88" style="left:344px;top:253.30px;letter-spacing:-0.26px;">Bug</span>
<span class="t" id="t89" style="left:413.7px;top:253.30px;letter-spacing:-0.25px;transform:scaleX(0.940);transform-origin:0 50%;">Open</span>
<div class="abs" style="left:482px;top:249.3px;width:69.6px;height:21.5px;background:#f2d558"></div>
<span class="t" id="t90" style="left:483.7px;top:253.30px;color:rgba(60,40,20,0.72);word-spacing:2.29px;letter-spacing:-0.40px;">3 - Medium</span>
<span class="t" id="t91" style="left:553.4px;top:253.30px;word-spacing:1.62px;letter-spacing:-0.40px;">Joe P Smith</span>
<span class="t" id="t92" style="left:628.4px;top:253.30px;letter-spacing:-0.34px;">26-Jan-2019</span>
<div class="pg" style="top:254.0px"><b style="width:0%"></b></div>
<span class="t" id="t93" style="left:857.8px;top:254.10px;font-size:8.2px;letter-spacing:-0.25px;transform:scaleX(0.938);transform-origin:0 50%;">IN:6</span>
<div class="eb" style="top:252.1px"></div><span class="t" id="t94" style="left:926.6px;top:253.30px;letter-spacing:-0.24px;">Edit</span>
<div class="hr" style="top:291.8px"></div>
<div class="cb" style="left:132px;top:276.2px"></div>
<svg class="abs" style="left:145px;top:275.4px" width="10" height="10" viewBox="0 0 10 10"><g transform="rotate(38 5 5)"><path d="M6.9 2.6 V7.4 a1.9 1.9 0 0 1 -3.8 0 V1.9 a1.3 1.3 0 0 1 2.6 0 V6.9 a0.65 0.65 0 0 1 -1.3 0 V3.2" fill="none" stroke="#3a3a3a" stroke-width="1" stroke-linecap="round"/></g></svg>
<svg class="abs" style="left:159px;top:276.6px" width="10" height="10" viewBox="0 0 10 10"><path d="M1.3 0.5 H8.7 Q9.6 0.5 9.6 1.4 V7 L5 9.6 L0.4 7 V1.4 Q0.4 0.5 1.3 0.5 Z" fill="#e8363d"/></svg>
<span class="t" id="t95" style="left:172.4px;top:274.80px;word-spacing:2.19px;letter-spacing:-0.40px;text-decoration:underline;text-decoration-color:#8a8a8a;color:#5a5a5a;">Cannot add a new book to the system</span>
<span class="t" id="t96" style="left:344px;top:274.80px;letter-spacing:-0.26px;">Bug</span>
<span class="t" id="t97" style="left:413.7px;top:274.80px;letter-spacing:-0.19px;">Assigned</span>
<div class="abs" style="left:482px;top:270.8px;width:69.6px;height:21.5px;background:#f4765a"></div>
<span class="t" id="t98" style="left:483.7px;top:274.80px;color:rgba(60,40,20,0.72);word-spacing:2.29px;letter-spacing:-0.40px;">1 - Critical</span>
<span class="t" id="t99" style="left:553.4px;top:274.80px;word-spacing:1.62px;letter-spacing:-0.40px;">Joe P Smith</span>
<span class="t" id="t100" style="left:628.4px;top:274.80px;letter-spacing:-0.49px;">23-Dec-2018</span>
<span class="t" id="t101" style="left:710.6px;top:274.80px;word-spacing:1.62px;letter-spacing:-0.40px;">Joe P Smith</span>
<div class="pg" style="top:275.5px"><b style="width:25%"></b></div>
<span class="t" id="t102" style="left:857.8px;top:275.60px;font-size:8.2px;letter-spacing:-0.25px;transform:scaleX(0.938);transform-origin:0 50%;">IN:7</span>
<div class="eb" style="top:273.6px"></div><span class="t" id="t103" style="left:926.6px;top:274.80px;letter-spacing:-0.24px;">Edit</span>
<div class="hr" style="top:313.3px"></div>
<div class="cb" style="left:132px;top:297.7px"></div>
<svg class="abs" style="left:145px;top:296.9px" width="10" height="10" viewBox="0 0 10 10"><g transform="rotate(38 5 5)"><path d="M6.9 2.6 V7.4 a1.9 1.9 0 0 1 -3.8 0 V1.9 a1.3 1.3 0 0 1 2.6 0 V6.9 a0.65 0.65 0 0 1 -1.3 0 V3.2" fill="none" stroke="#3a3a3a" stroke-width="1" stroke-linecap="round"/></g></svg>
<svg class="abs" style="left:159px;top:298.1px" width="10" height="10" viewBox="0 0 10 10"><path d="M1.3 0.5 H8.7 Q9.6 0.5 9.6 1.4 V7 L5 9.6 L0.4 7 V1.4 Q0.4 0.5 1.3 0.5 Z" fill="#e8363d"/></svg>
<span class="t" id="t104" style="left:172.4px;top:296.30px;word-spacing:2.79px;letter-spacing:-0.40px;text-decoration:underline;text-decoration-color:#8a8a8a;color:#5a5a5a;">Editing the date on a book is clunky</span>
<span class="t" id="t105" style="left:344px;top:296.30px;letter-spacing:-0.26px;">Bug</span>
<span class="t" id="t106" style="left:413.7px;top:296.30px;letter-spacing:-0.19px;">Assigned</span>
<div class="abs" style="left:482px;top:292.3px;width:69.6px;height:21.5px;background:#f29e58"></div>
<span class="t" id="t107" style="left:483.7px;top:296.30px;color:rgba(60,40,20,0.72);word-spacing:2.44px;letter-spacing:-0.40px;">2 - High</span>
<span class="t" id="t108" style="left:553.4px;top:296.30px;word-spacing:1.62px;letter-spacing:-0.40px;">Joe P Smith</span>
<span class="t" id="t109" style="left:628.4px;top:296.30px;letter-spacing:-0.45px;">17-Feb-2019</span>
<span class="t" id="t110" style="left:710.6px;top:296.30px;word-spacing:0.80px;letter-spacing:-0.42px;">Fred Bloggs</span>
<div class="pg" style="top:297.0px"><b style="width:50%"></b></div>
<span class="t" id="t111" style="left:857.8px;top:297.10px;font-size:8.2px;letter-spacing:-0.25px;transform:scaleX(0.938);transform-origin:0 50%;">IN:8</span>
<div class="eb" style="top:295.1px"></div><span class="t" id="t112" style="left:926.6px;top:296.30px;letter-spacing:-0.24px;">Edit</span>
<div class="hr" style="top:334.8px"></div>
<div class="cb" style="left:132px;top:319.2px"></div>
<svg class="abs" style="left:159px;top:319.6px" width="10" height="10" viewBox="0 0 10 10"><path d="M1.3 0.5 H8.7 Q9.6 0.5 9.6 1.4 V7 L5 9.6 L0.4 7 V1.4 Q0.4 0.5 1.3 0.5 Z" fill="#e8363d"/></svg>
<span class="t" id="t113" style="left:172.4px;top:317.80px;word-spacing:3.07px;letter-spacing:-0.40px;text-decoration:underline;text-decoration-color:#8a8a8a;color:#5a5a5a;">Editing the date on an author is clunky</span>
<span class="t" id="t114" style="left:344px;top:317.80px;letter-spacing:-0.26px;">Bug</span>
<span class="t" id="t115" style="left:413.7px;top:317.80px;letter-spacing:-0.19px;">Assigned</span>
<div class="abs" style="left:482px;top:313.8px;width:69.6px;height:21.5px;background:#f2d558"></div>
<span class="t" id="t116" style="left:483.7px;top:317.80px;color:rgba(60,40,20,0.72);word-spacing:2.29px;letter-spacing:-0.40px;">3 - Medium</span>
<span class="t" id="t117" style="left:553.4px;top:317.80px;word-spacing:1.62px;letter-spacing:-0.40px;">Joe P Smith</span>
<span class="t" id="t118" style="left:628.4px;top:317.80px;letter-spacing:-0.45px;">26-Feb-2019</span>
<span class="t" id="t119" style="left:710.6px;top:317.80px;word-spacing:1.62px;letter-spacing:-0.40px;">Joe P Smith</span>
<div class="pg" style="top:318.5px"><b style="width:75%"></b></div>
<span class="t" id="t120" style="left:857.8px;top:318.60px;font-size:8.2px;letter-spacing:-0.25px;transform:scaleX(0.938);transform-origin:0 50%;">IN:9</span>
<div class="eb" style="top:316.6px"></div><span class="t" id="t121" style="left:926.6px;top:317.80px;letter-spacing:-0.24px;">Edit</span>
<div class="hr" style="top:356.3px"></div>
<div class="cb" style="left:132px;top:340.7px"></div>
<svg class="abs" style="left:159px;top:341.1px" width="10" height="10" viewBox="0 0 10 10"><path d="M1.3 0.5 H8.7 Q9.6 0.5 9.6 1.4 V7 L5 9.6 L0.4 7 V1.4 Q0.4 0.5 1.3 0.5 Z" fill="#e8363d"/></svg>
<span class="t" id="t122" style="left:172.4px;top:339.30px;word-spacing:2.22px;letter-spacing:-0.40px;text-decoration:underline;text-decoration-color:#8a8a8a;color:#5a5a5a;">Doesn't let me add a new category</span>
<span class="t" id="t123" style="left:344px;top:339.30px;letter-spacing:-0.26px;">Bug</span>
<span class="t" id="t124" style="left:413.7px;top:339.30px;letter-spacing:-0.23px;">Resolved</span>
<div class="abs" style="left:482px;top:335.3px;width:69.6px;height:21.5px;background:#f3f560"></div>
<span class="t" id="t125" style="left:483.7px;top:339.30px;color:rgba(60,40,20,0.72);word-spacing:1.89px;letter-spacing:-0.40px;">4 - Low</span>
<span class="t" id="t126" style="left:553.4px;top:339.30px;word-spacing:0.80px;letter-spacing:-0.42px;">Fred Bloggs</span>
<span class="t" id="t127" style="left:628.4px;top:339.30px;letter-spacing:-0.38px;">6-Mar-2019</span>
<span class="t" id="t128" style="left:710.6px;top:339.30px;word-spacing:0.80px;letter-spacing:-0.42px;">Fred Bloggs</span>
<div class="pg" style="top:340.0px"><b style="width:25%"></b></div>
<span class="t" id="t129" style="left:857.8px;top:340.10px;font-size:8.2px;letter-spacing:-0.25px;transform:scaleX(0.926);transform-origin:0 50%;">IN:10</span>
<div class="eb" style="top:338.1px"></div><span class="t" id="t130" style="left:926.6px;top:339.30px;letter-spacing:-0.24px;">Edit</span>
<div class="hr" style="top:377.8px"></div>
<div class="cb" style="left:132px;top:362.2px"></div>
<svg class="abs" style="left:159px;top:362.6px" width="10" height="10" viewBox="0 0 10 10"><path d="M1.3 0.5 H8.7 Q9.6 0.5 9.6 1.4 V7 L5 9.6 L0.4 7 V1.4 Q0.4 0.5 1.3 0.5 Z" fill="#e8363d"/></svg>
<span class="t" id="t131" style="left:172.4px;top:360.80px;word-spacing:3.20px;letter-spacing:-0.38px;text-decoration:underline;text-decoration-color:#8a8a8a;color:#5a5a5a;">Validation on the edit book page</span>
<span class="t" id="t132" style="left:344px;top:360.80px;letter-spacing:-0.26px;">Bug</span>
<span class="t" id="t133" style="left:413.7px;top:360.80px;letter-spacing:-0.23px;">Resolved</span>
<div class="abs" style="left:482px;top:356.8px;width:69.6px;height:21.5px;background:#f4765a"></div>
<span class="t" id="t134" style="left:483.7px;top:360.80px;color:rgba(60,40,20,0.72);word-spacing:2.29px;letter-spacing:-0.40px;">1 - Critical</span>
<span class="t" id="t135" style="left:553.4px;top:360.80px;word-spacing:0.80px;letter-spacing:-0.42px;">Fred Bloggs</span>
<span class="t" id="t136" style="left:628.4px;top:360.80px;letter-spacing:-0.44px;">12-Mar-2019</span>
<span class="t" id="t137" style="left:710.6px;top:360.80px;word-spacing:1.62px;letter-spacing:-0.40px;">Joe P Smith</span>
<div class="pg" style="top:361.5px"><b style="width:50%"></b></div>
<span class="t" id="t138" style="left:857.8px;top:361.60px;font-size:8.2px;letter-spacing:-0.44px;">IN:11</span>
<div class="eb" style="top:359.6px"></div><span class="t" id="t139" style="left:926.6px;top:360.80px;letter-spacing:-0.24px;">Edit</span>
<div class="hr" style="top:399.3px"></div>
<div class="cb" style="left:132px;top:383.7px"></div>
<svg class="abs" style="left:159px;top:384.1px" width="10" height="10" viewBox="0 0 10 10"><path d="M1.3 0.5 H8.7 Q9.6 0.5 9.6 1.4 V7 L5 9.6 L0.4 7 V1.4 Q0.4 0.5 1.3 0.5 Z" fill="#e8363d"/></svg>
<span class="t" id="t140" style="left:172.4px;top:382.30px;word-spacing:3.20px;letter-spacing:-0.29px;text-decoration:underline;text-decoration-color:#8a8a8a;color:#5a5a5a;">Quote handling issues throughout</span>
<span class="t" id="t141" style="left:344px;top:382.30px;letter-spacing:-0.26px;">Bug</span>
<span class="t" id="t142" style="left:413.7px;top:382.30px;letter-spacing:-0.23px;">Resolved</span>
<div class="abs" style="left:482px;top:378.3px;width:69.6px;height:21.5px;background:#f29e58"></div>
<span class="t" id="t143" style="left:483.7px;top:382.30px;color:rgba(60,40,20,0.72);word-spacing:2.44px;letter-spacing:-0.40px;">2 - High</span>
<span class="t" id="t144" style="left:553.4px;top:382.30px;word-spacing:0.80px;letter-spacing:-0.42px;">Fred Bloggs</span>
<span class="t" id="t145" style="left:628.4px;top:382.30px;letter-spacing:-0.29px;">27-Apr-2019</span>
<span class="t" id="t146" style="left:710.6px;top:382.30px;word-spacing:0.80px;letter-spacing:-0.42px;">Fred Bloggs</span>
<div class="pg" style="top:383.0px"><b style="width:75%"></b></div>
<span class="t" id="t147" style="left:857.8px;top:383.10px;font-size:8.2px;letter-spacing:-0.25px;transform:scaleX(0.926);transform-origin:0 50%;">IN:12</span>
<div class="eb" style="top:381.1px"></div><span class="t" id="t148" style="left:926.6px;top:382.30px;letter-spacing:-0.24px;">Edit</span>
<div class="hr" style="top:420.8px"></div>
<div class="cb" style="left:132px;top:405.2px"></div>
<svg class="abs" style="left:159px;top:405.6px" width="10" height="10" viewBox="0 0 10 10"><path d="M1.3 0.5 H8.7 Q9.6 0.5 9.6 1.4 V7 L5 9.6 L0.4 7 V1.4 Q0.4 0.5 1.3 0.5 Z" fill="#e8363d"/></svg>
<span class="t" id="t149" style="left:172.4px;top:403.80px;word-spacing:2.76px;letter-spacing:-0.40px;text-decoration:underline;text-decoration-color:#8a8a8a;color:#5a5a5a;">The tables get cutoff on low-res modes</span>
<span class="t" id="t150" style="left:344px;top:403.80px;letter-spacing:-0.26px;">Bug</span>
<span class="t" id="t151" style="left:413.7px;top:403.80px;letter-spacing:-0.24px;">Closed</span>
<div class="abs" style="left:482px;top:399.8px;width:69.6px;height:21.5px;background:#f2d558"></div>
<span class="t" id="t152" style="left:483.7px;top:403.80px;color:rgba(60,40,20,0.72);word-spacing:2.29px;letter-spacing:-0.40px;">3 - Medium</span>
<span class="t" id="t153" style="left:553.4px;top:403.80px;word-spacing:1.62px;letter-spacing:-0.40px;">Joe P Smith</span>
<span class="t" id="t154" style="left:628.4px;top:403.80px;letter-spacing:-0.29px;">26-Apr-2019</span>
<span class="t" id="t155" style="left:710.6px;top:403.80px;word-spacing:1.62px;letter-spacing:-0.40px;">Joe P Smith</span>
<div class="pg" style="top:404.5px"><b style="width:100%"></b></div>
<span class="t" id="t156" style="left:857.8px;top:404.60px;font-size:8.2px;letter-spacing:-0.25px;transform:scaleX(0.926);transform-origin:0 50%;">IN:13</span>
<div class="eb" style="top:402.6px"></div><span class="t" id="t157" style="left:926.6px;top:403.80px;letter-spacing:-0.24px;">Edit</span>
<div class="hr" style="top:442.3px"></div>
<div class="cb" style="left:132px;top:426.7px"></div>
<svg class="abs" style="left:159px;top:427.1px" width="10" height="10" viewBox="0 0 10 10"><path d="M1.3 0.5 H8.7 Q9.6 0.5 9.6 1.4 V7 L5 9.6 L0.4 7 V1.4 Q0.4 0.5 1.3 0.5 Z" fill="#e8363d"/></svg>
<span class="t" id="t158" style="left:172.4px;top:425.30px;word-spacing:3.20px;letter-spacing:-0.35px;text-decoration:underline;text-decoration-color:#8a8a8a;color:#5a5a5a;">Permissions not updating when changed</span>
<span class="t" id="t159" style="left:344px;top:425.30px;letter-spacing:-0.26px;">Bug</span>
<span class="t" id="t160" style="left:413.7px;top:425.30px;letter-spacing:-0.24px;">Closed</span>
<div class="abs" style="left:482px;top:421.3px;width:69.6px;height:21.5px;background:#f3f560"></div>
<span class="t" id="t161" style="left:483.7px;top:425.30px;color:rgba(60,40,20,0.72);word-spacing:1.89px;letter-spacing:-0.40px;">4 - Low</span>
<span class="t" id="t162" style="left:553.4px;top:425.30px;word-spacing:1.62px;letter-spacing:-0.40px;">Joe P Smith</span>
<span class="t" id="t163" style="left:628.4px;top:425.30px;letter-spacing:-0.34px;">24-Jan-2019</span>
<span class="t" id="t164" style="left:710.6px;top:425.30px;word-spacing:0.80px;letter-spacing:-0.42px;">Fred Bloggs</span>
<div class="pg" style="top:426.0px"><b style="width:100%"></b></div>
<span class="t" id="t165" style="left:857.8px;top:426.10px;font-size:8.2px;letter-spacing:-0.25px;transform:scaleX(0.926);transform-origin:0 50%;">IN:14</span>
<div class="eb" style="top:424.1px"></div><span class="t" id="t166" style="left:926.6px;top:425.30px;letter-spacing:-0.24px;">Edit</span>
<div class="hr" style="top:463.8px"></div>
<div class="cb" style="left:132px;top:448.2px"></div>
<svg class="abs" style="left:159px;top:448.6px" width="10" height="10" viewBox="0 0 10 10"><path d="M1.3 0.5 H8.7 Q9.6 0.5 9.6 1.4 V7 L5 9.6 L0.4 7 V1.4 Q0.4 0.5 1.3 0.5 Z" fill="#e8363d"/></svg>
<span class="t" id="t167" style="left:172.4px;top:446.80px;word-spacing:3.20px;letter-spacing:-0.32px;text-decoration:underline;text-decoration-color:#8a8a8a;color:#5a5a5a;">Session handling</span>
<span class="t" id="t168" style="left:344px;top:446.80px;letter-spacing:-0.26px;">Bug</span>
<span class="t" id="t169" style="left:413.7px;top:446.80px;letter-spacing:-0.24px;">Closed</span>
<div class="abs" style="left:482px;top:442.8px;width:69.6px;height:21.5px;background:#f4765a"></div>
<span class="t" id="t170" style="left:483.7px;top:446.80px;color:rgba(60,40,20,0.72);word-spacing:2.29px;letter-spacing:-0.40px;">1 - Critical</span>
<span class="t" id="t171" style="left:553.4px;top:446.80px;word-spacing:1.62px;letter-spacing:-0.40px;">Joe P Smith</span>
<span class="t" id="t172" style="left:628.4px;top:446.80px;letter-spacing:-0.29px;">13-Apr-2019</span>
<span class="t" id="t173" style="left:710.6px;top:446.80px;word-spacing:1.62px;letter-spacing:-0.40px;">Joe P Smith</span>
<div class="pg" style="top:447.5px"><b style="width:100%"></b></div>
<span class="t" id="t174" style="left:857.8px;top:447.60px;font-size:8.2px;letter-spacing:-0.25px;transform:scaleX(0.926);transform-origin:0 50%;">IN:15</span>
<div class="eb" style="top:445.6px"></div><span class="t" id="t175" style="left:926.6px;top:446.80px;letter-spacing:-0.24px;">Edit</span>
<span class="t" id="t176" style="left:132px;top:469.50px;letter-spacing:-0.25px;transform:scaleX(0.942);transform-origin:0 50%;">Show</span>
<div class="abs" style="left:156.2px;top:467.3px;width:53.2px;height:16.6px;border:1px solid #d8d8d8;border-radius:2.5px;background:#fff"></div><div class="abs" style="left:190.3px;top:468.3px;width:1px;height:14.6px;background:#d8d8d8"></div>
<span class="t" id="t177" style="left:160.5px;top:469.50px;font-size:8px;letter-spacing:-0.25px;transform:scaleX(0.901);transform-origin:0 50%;">15</span>
<svg class="abs" style="left:195.5px;top:473px" width="9" height="6" viewBox="0 0 9 6"><path d="M1 1 L4.5 4.5 L8 1" fill="none" stroke="#3a3a3a" stroke-width="1.2"/></svg>
<span class="t" id="t178" style="left:213px;top:469.50px;word-spacing:1.63px;letter-spacing:-0.40px;">rows per page</span>
<svg class="abs" style="left:761.5px;top:473.3px" width="10.4" height="7" viewBox="0 0 9 5.6" preserveAspectRatio="none"><path d="M0 0 H1.2 V5.6 H0Z M5 0 V5.6 L1.4 2.8Z M8.6 0 V5.6 L5 2.8Z" fill="#b4b4b4"/></svg>
<svg class="abs" style="left:774px;top:473.3px" width="10.4" height="7" viewBox="0 0 9 5.6" preserveAspectRatio="none"><path d="M3.9 0 V5.6 L0 2.8Z M7.8 0 V5.6 L3.9 2.8Z" fill="#b4b4b4"/></svg>
<span class="t" id="t179" style="left:786.5px;top:470.80px;word-spacing:3.20px;letter-spacing:-0.34px;">Displaying page</span>
<div class="abs" style="left:853px;top:467.5px;width:42.5px;height:17.8px;border:1px solid #d8d8d8;border-radius:2.5px;background:#fff"></div>
<span class="t" id="t180" style="left:860px;top:470.80px;font-size:8.5px;">1</span>
<svg class="abs" style="left:899px;top:472.6px" width="9.4" height="9.4" viewBox="0 0 11 11"><path d="M1.4 4.8 A4.2 4.2 0 0 1 8.7 3" fill="none" stroke="#555" stroke-width="1.7"/><path d="M10.3 0.4 V4.4 H6.3Z" fill="#555"/><path d="M9.6 6.2 A4.2 4.2 0 0 1 2.3 8" fill="none" stroke="#555" stroke-width="1.7"/><path d="M0.7 10.6 V6.6 H4.7Z" fill="#555"/></svg>
<span class="t" id="t181" style="left:911px;top:470.80px;word-spacing:1.18px;letter-spacing:-0.40px;">of 4</span>
<svg class="abs" style="left:929.3px;top:473.3px" width="10.4" height="7" viewBox="0 0 9 5.6" preserveAspectRatio="none"><path d="M0 0 V5.6 L3.9 2.8Z M3.9 0 V5.6 L7.8 2.8Z" fill="#555"/></svg>
<svg class="abs" style="left:941px;top:473.3px" width="10.4" height="7" viewBox="0 0 9 5.6" preserveAspectRatio="none"><path d="M0 0 V5.6 L3.6 2.8Z M3.6 0 V5.6 L7.2 2.8Z M7.4 0 H8.6 V5.6 H7.4Z" fill="#555"/></svg>
<div class="abs" style="left:128px;top:488.3px;width:824px;height:1px;background:#e6e6e6"></div>
</body></html>
